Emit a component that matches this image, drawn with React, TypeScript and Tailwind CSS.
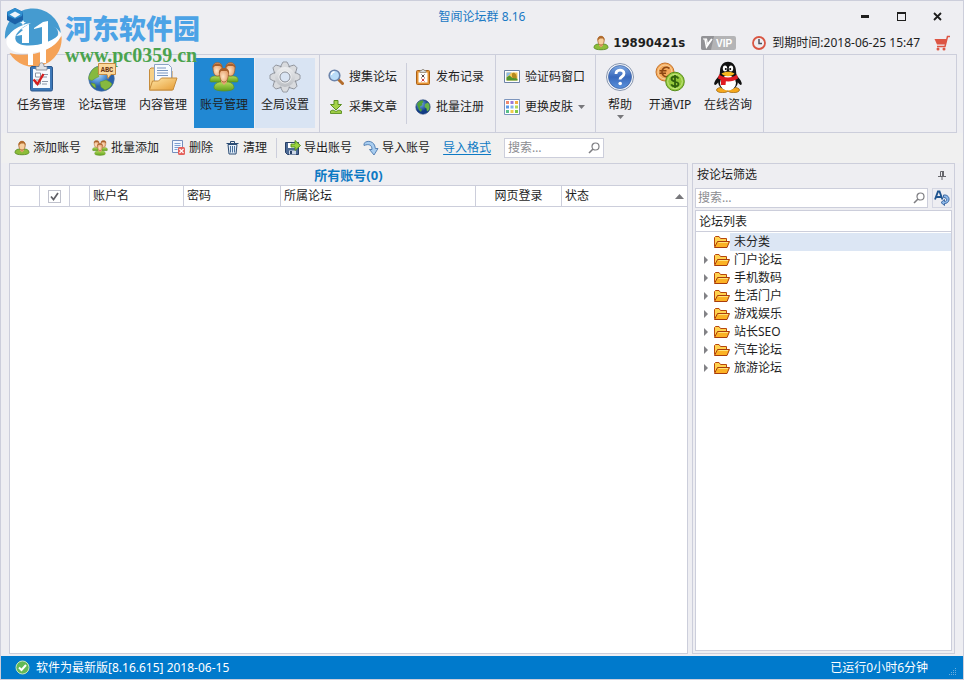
import type { ReactNode } from "react";

/* ---------- icons ---------- */

function Heads({ size }: { size: number }) {
  return (
    <svg width={size} height={size} viewBox="0 0 30 30">
      <defs>
        <radialGradient id="skin" cx="40%" cy="60%">
          <stop offset="0" stopColor="#ffe3c2" />
          <stop offset="1" stopColor="#e8a877" />
        </radialGradient>
        <linearGradient id="shirt" x2="0" y2="1">
          <stop offset="0" stopColor="#b5dc5a" />
          <stop offset="1" stopColor="#5f9f1e" />
        </linearGradient>
      </defs>
      <g stroke="#5f8f1e" strokeWidth=".6" fill="url(#shirt)">
        <path d="M1 18c0-3 2-4 6-4h5v6H2c-1 0-1-1-1-2z" />
        <path d="M29 18c0-3-2-4-6-4h-5v6h10c1 0 1-1 1-2z" />
      </g>
      <g stroke="#9a5a2a" strokeWidth=".7" fill="url(#skin)">
        <path d="M4 5c0-6 9-6 9 0 0 5-1 9-4.500 9S4 10 4 5z" />
        <path d="M17 5c0-6 9-6 9 0 0 5-1 9-4.500 9S17 10 17 5z" />
      </g>
      <path d="M3.500 6C3 0 14 0 13.500 6L11 4 6 4z" fill="#a8602c" />
      <path d="M16.500 6C16 0 27 0 26.500 6L24 4l-5 0z" fill="#a8602c" />
      <path d="M5 26c0-4 3-6 7-6h6c4 0 7 2 7 6 0 4-20 4-20 0z" stroke="#5f8f1e" strokeWidth=".7" fill="url(#shirt)" />
      <path d="M12 17h6v3l-3 3-3-3z" fill="#e3a272" />
      <path d="M10.500 11c0-6 9-6 9 0 0 5-1.500 9-4.500 9s-4.500-4-4.500-9z" stroke="#9a5a2a" strokeWidth=".7" fill="url(#skin)" />
      <path d="M10 12C8.500 4 21.500 4 20 12l-2-3-6 0z" fill="#a8602c" />
    </svg>
  );
}

function Person() {
  return (
    <svg width="16" height="16" viewBox="0 0 16 16">
      <path d="M1 12.500c0-2.500 2-3.500 5-3.500h4c3 0 5 1 5 3.500 0 3-14 3-14 0z" fill="#8dbd38" stroke="#4f851b" strokeWidth=".8" />
      <path d="M6 9h4v1.500l-2 2-2-2z" fill="#e0a06c" />
      <path d="M4.800 5c0-5 6.400-5 6.400 0 0 3-1.200 5-3.200 5S4.800 8 4.800 5z" fill="#f7cf9e" stroke="#a8672f" strokeWidth=".8" />
      <path d="M4.500 5.500C4-.500 12-.500 11.500 5.500L10 3.500H7z" fill="#b06a2d" />
    </svg>
  );
}

function Tasks() {
  return (
    <svg width="30" height="30" viewBox="0 0 30 30">
      <rect x="4.500" y="4.500" width="22" height="24.500" rx="1.500" fill="#3d78b8" stroke="#2b578c" />
      <path d="M7 7h17v19H7z" fill="#f7faff" />
      <path d="M10 8V4.500h3c0-5 5-5 5 0h3V8z" fill="#dfe1e5" stroke="#7d8490" strokeWidth=".8" />
      <path d="M9.500 11h5v4h-5zM9.500 18h5v4h-5z" fill="#fff" stroke="#8b95a3" />
      <path d="M16 12.500h6M16 15h5M16 19.500h6M16 22h5" stroke="#8a96a8" />
      <path d="M7.500 17.500l4 4.500 6-10" fill="none" stroke="#d41f1f" strokeWidth="2.400" />
    </svg>
  );
}

function Globe({ size }: { size: number }) {
  return (
    <svg width={size} height={size} viewBox="0 0 16 16">
      <defs>
        <radialGradient id="sea" cx="35%" cy="30%">
          <stop offset="0" stopColor="#79aee8" />
          <stop offset="1" stopColor="#123c86" />
        </radialGradient>
      </defs>
      <circle cx="8" cy="8" r="7.200" fill="url(#sea)" stroke="#1b3a72" strokeWidth=".6" />
      <path d="M2 5c1-2 3-3.500 5.500-3.800L8.500 3 7 4.500 7.500 6 5 7.500 5 9 7 10.500 6 13 4 11 3 8z" fill="#4fa03a" />
      <path d="M10 5l3-1.500c2 2.500 2 5 1 7.500l-2 1.500-.500-3L9.500 8z" fill="#69b447" />
    </svg>
  );
}

function Forum() {
  return (
    <svg width="30" height="30" viewBox="0 0 30 30">
      <defs>
        <radialGradient id="ball" cx="35%" cy="30%">
          <stop offset="0" stopColor="#cfe8fc" />
          <stop offset=".6" stopColor="#5b9ada" />
          <stop offset="1" stopColor="#2a61a8" />
        </radialGradient>
      </defs>
      <circle cx="14.500" cy="16.500" r="12.800" fill="url(#ball)" stroke="#4471a5" strokeWidth=".6" />
      <path d="M3 12c2-5 5-7 9-7.500l1 4-2 3 1 3-4 2-3 2-3-1c-.500-2 0-4 1-5.500zM13 20l6-2 4 2 2 2c-1 3-4 5-7 6l-4-3zM4 21l4 1 1 4C6.500 25.500 5 23.500 4 21z" fill="#86b93f" stroke="#5b9428" strokeWidth=".5" />
      <path d="M11.500 1.500h17v11h-4.500l-3 4-1-4h-8.500z" fill="#fbd79a" stroke="#c58a42" />
      <text x="20" y="9.800" textAnchor="middle" fontSize="7" fontWeight="bold" fontFamily="Liberation Mono, monospace" fill="#6b3410">
        ABC
      </text>
    </svg>
  );
}

function Content() {
  return (
    <svg width="32" height="30" viewBox="0 0 32 30">
      <defs>
        <linearGradient id="manila" x2="1" y2="1">
          <stop offset="0" stopColor="#ffe7a8" />
          <stop offset="1" stopColor="#e69c34" />
        </linearGradient>
      </defs>
      <path d="M2.500 28V7.500L4 6h6l2 3h13v19z" fill="#f6cf86" stroke="#c68c3c" />
      <path d="M7.500 2.500h14l3 3V20h-17z" fill="#f8fbff" stroke="#8ba3c4" />
      <path d="M10 6h9M10 8.500h11M10 11h11M10 13.500h11" stroke="#7a97c0" />
      <path d="M2.500 28l3-9h6l3-3h15.500l-4 12z" fill="url(#manila)" stroke="#c68c3c" strokeLinejoin="round" />
    </svg>
  );
}

function Gear() {
  const teeth = [0, 45, 90, 135, 180, 225, 270, 315];
  return (
    <svg width="32" height="32" viewBox="0 0 32 32">
      <defs>
        <linearGradient id="steel" x2="0" y2="1">
          <stop offset="0" stopColor="#eeeff1" />
          <stop offset="1" stopColor="#babdc2" />
        </linearGradient>
      </defs>
      <g fill="#d4d6da" stroke="#8d9199" strokeWidth=".9" strokeLinejoin="round">
        {teeth.map((a) => (
          <path key={a} d="M10.500 7.500L14 1h4l3.500 6.500z" transform={`rotate(${a} 16 16)`} />
        ))}
        <circle cx="16" cy="16" r="10.800" fill="url(#steel)" />
      </g>
      {teeth.map((a) => (
        <path key={a} d="M11.500 8L14.400 1.800h3.200L20.500 8z" fill="#d9dbde" transform={`rotate(${a} 16 16)`} />
      ))}
      <circle cx="16" cy="16" r="10" fill="url(#steel)" />
      <circle cx="16" cy="16" r="6" fill="none" stroke="#f4f5f7" />
      <circle cx="16" cy="16" r="5" fill="#d9e4f3" stroke="#8d9199" />
    </svg>
  );
}

function Magnifier() {
  return (
    <svg width="16" height="16" viewBox="0 0 16 16">
      <path d="M10 10l4.500 4.500" stroke="#b36c2c" strokeWidth="3" strokeLinecap="round" />
      <circle cx="6.500" cy="6.500" r="5.300" fill="#b9dcf8" stroke="#6c84ab" strokeWidth="1.600" />
      <path d="M3.500 6a3 3 0 0 1 3-3" fill="none" stroke="#fff" strokeWidth="1.300" />
    </svg>
  );
}

function DownArrow() {
  return (
    <svg width="16" height="16" viewBox="0 0 16 16">
      <path d="M6 1.500h4v4h3.500L8 11 2.500 5.500H6z" fill="#a5d34a" stroke="#5b8f20" />
      <path d="M2.500 12l2.500-1 3 1.500 3-1.500 2.500 1v2.500h-11z" fill="#9dcc45" stroke="#5b8f20" strokeWidth=".9" />
    </svg>
  );
}

function Record() {
  return (
    <svg width="16" height="16" viewBox="0 0 16 16">
      <rect x="1.500" y="1.500" width="13" height="14" rx="1" fill="#e69433" stroke="#a9601a" />
      <path d="M3.500 3.500h9v10h-9z" fill="#fff" />
      <path d="M5 3.500v-2h1.500C6.500 0 9.500 0 9.500 1.500H11v2z" fill="#d4d7dc" stroke="#8a8177" strokeWidth=".7" />
      <path d="M6.500 5.500l3 3m0-3l-3 3" stroke="#5b4545" />
      <path d="M6.500 9.500l3 3m0-3l-3 3" stroke="#d34040" />
    </svg>
  );
}

function Picture() {
  return (
    <svg width="16" height="16" viewBox="0 0 16 16">
      <path d="M.500 1.500h15v12H.500z" fill="#fff" stroke="#6d83a6" />
      <path d="M2.500 3.500h11v8h-11z" fill="#f5c65a" />
      <path d="M2.500 3.500h5l-5 5z" fill="#89bdea" />
      <path d="M2.500 11.500V8.500l3-2 3 2.500 2-1 3 2v1.500z" fill="#4f952e" />
      <path d="M8 4.500l2-1 2 2 1 3-2 1-3-1z" fill="#b48a1e" />
    </svg>
  );
}

const swatches = ["#ef8a6f", "#9b79d8", "#f2ad41", "#5b98e8", "#7fb5ec", "#b2d955", "#5bc08a", "#f2cb4b", "#7fc845"];

function Palette() {
  return (
    <svg width="16" height="16" viewBox="0 0 16 16">
      <path d="M.500.500h15v15H.500z" fill="#fff" stroke="#7d95bd" />
      {swatches.map((c, i) => (
        <rect key={c} x={2 + (i % 3) * 4.500} y={2 + Math.floor(i / 3) * 4.500} width="3" height="3" fill={c} />
      ))}
    </svg>
  );
}

function Help() {
  return (
    <svg width="30" height="30" viewBox="0 0 30 30">
      <defs>
        <linearGradient id="help" x2="0" y2="1">
          <stop offset="0" stopColor="#7fa9e2" />
          <stop offset=".5" stopColor="#3868bc" />
          <stop offset="1" stopColor="#5b93dc" />
        </linearGradient>
      </defs>
      <circle cx="15" cy="15" r="13.500" fill="#f4f7fc" stroke="#8795ad" />
      <circle cx="15" cy="15" r="11.500" fill="url(#help)" stroke="#3b5f9f" strokeWidth=".7" />
      <path d="M11 12c0-5 8-5 8-.500 0 3.500-4 3-4 6" fill="none" stroke="#fff" strokeWidth="2.800" />
      <circle cx="15.200" cy="21.500" r="1.800" fill="#fff" />
    </svg>
  );
}

function Coins() {
  return (
    <svg width="30" height="30" viewBox="0 0 30 30">
      <circle cx="10" cy="10" r="9" fill="#f3a95b" stroke="#c6732a" />
      <circle cx="10" cy="10" r="7" fill="none" stroke="#fbd3a0" />
      <path d="M14.500 6.500c-4-3-7.500 0-7.500 3.500s3.500 6.500 7 3.500M4.500 8.800h7M4.500 11.200h6.500" fill="none" stroke="#8d4713" strokeWidth="1.600" />
      <circle cx="20" cy="19.500" r="9.300" fill="#94c83a" stroke="#568d1c" />
      <circle cx="20" cy="19.500" r="7.300" fill="none" stroke="#c6e685" />
      <path d="M23.500 16.500c-1.500-2.500-7-2.500-7 .500s7 2 7 5-6 3-7.300.300M20 13v13" fill="none" stroke="#315f0d" strokeWidth="1.800" />
    </svg>
  );
}

function Penguin() {
  return (
    <svg width="30" height="32" viewBox="0 0 30 32">
      <path d="M6 15C2 19 0 23 2 24c1 0 3-2 4-4zM24 15c4 4 6 8 4 9-1 0-3-2-4-4z" fill="#111" />
      <ellipse cx="9.500" cy="29" rx="6" ry="2.700" fill="#f6a81c" stroke="#97600c" strokeWidth=".7" />
      <ellipse cx="20.500" cy="29" rx="6" ry="2.700" fill="#f6a81c" stroke="#97600c" strokeWidth=".7" />
      <path d="M5 20C5 16 7 14 7 10 7-2.500 23-2.500 23 10c0 4 2 6 2 10 0 12-20 12-20 0z" fill="#111" />
      <ellipse cx="15" cy="22" rx="8" ry="7.500" fill="#fff" />
      <ellipse cx="12" cy="7.500" rx="2.200" ry="3" fill="#fff" />
      <ellipse cx="18" cy="7.500" rx="2.200" ry="3" fill="#fff" />
      <circle cx="12.800" cy="8" r="1" />
      <circle cx="17.200" cy="8" r="1" />
      <path d="M8.500 12.500c4-2.500 9-2.500 13 0-3 3.500-10 3.500-13 0z" fill="#f8b71e" />
      <path d="M6 13.500c5 4 13 4 18 0l1 4c-6 4-13 4-20 0z" fill="#e01b22" />
      <path d="M8 18l5 1-.500 5H8z" fill="#e01b22" />
    </svg>
  );
}

function DeleteIcon() {
  return (
    <svg width="16" height="16" viewBox="0 0 16 16">
      <path d="M2.500.500h10v12h-10z" fill="#f2f7ff" stroke="#7690bd" />
      <path d="M4.500 3.500h6M4.500 5.500h6M4.500 7.500h6M4.500 9.500h3" stroke="#7ea0d2" />
      <rect x="8" y="7" width="7" height="8" rx="1.500" fill="#e4605a" />
      <path d="M9.500 9l4 4m0-4l-4 4" stroke="#fff" strokeWidth="1.200" />
    </svg>
  );
}

function Trash() {
  return (
    <svg width="16" height="16" viewBox="0 0 16 16">
      <path d="M4 4.500h9l-1 9.500H5z" fill="#e3eef9" stroke="#2b4c74" />
      <path d="M2.500 3.500h12M6.500 3V1.500h4V3" fill="none" stroke="#2b4c74" />
      <path d="M6.500 6v6.500M8.500 6v6.500M10.500 6v6.500" stroke="#4a709c" />
    </svg>
  );
}

function Export() {
  return (
    <svg width="16" height="16" viewBox="0 0 16 16">
      <path d="M.500 2.500h13v12h-11l-2-2z" fill="#4c6a95" stroke="#263f66" />
      <path d="M3 3h8v5H3z" fill="#fff" />
      <path d="M4 10.500h7v4H4z" fill="#cfd9e8" />
      <path d="M5 11h2v3H5z" fill="#263f66" />
      <path d="M6 4h4V.500l5.500 5L10 10.500V7H6z" fill="#9bd33d" stroke="#4d8a1b" strokeWidth=".9" />
    </svg>
  );
}

function Import() {
  return (
    <svg width="16" height="16" viewBox="0 0 16 16">
      <path d="M1 3.500C4-.500 12 1 12.300 8.500H15L11 15 6.500 9.500H9C9 5 6 3.500 1 5.500z" fill="#a8cdf0" stroke="#4d79ae" strokeWidth=".9" strokeLinejoin="round" />
    </svg>
  );
}

function Folder() {
  return (
    <svg className="shrink-0" width="16" height="14" viewBox="0 0 16 14">
      <path d="M.500 11.500v-9l1-1H5l1.500 2h6v3" fill="#ffd24f" stroke="#b8470c" />
      <path d="M.500 12.500L3.500 6.500h12l-2.500 6z" fill="#fbb224" stroke="#a93c0b" strokeLinejoin="round" />
      <path d="M4.500 7.500h9.500" stroke="#ffe27a" />
    </svg>
  );
}

function SearchGlyph() {
  return (
    <svg className="shrink-0" width="12" height="12" viewBox="0 0 12 12" fill="none" stroke="#7e7e82">
      <circle cx="7.500" cy="4.500" r="3.500" strokeWidth="1.200" />
      <path d="M5 7L1 11" strokeWidth="1.600" />
    </svg>
  );
}

function Watermark() {
  return (
    <div className="pointer-events-none absolute left-[3px] top-1.5 z-10 flex gap-[3px]">
      <svg width="58" height="60" viewBox="4 8 58 60">
        <path d="M5 40A28 28 0 0 1 61 35C56 22 22 20 5 40z" fill="#459bd0" />
        <path d="M14 44C8 36 22 24 38 24c14 0 21 5 20 11-1 9-14 15-28 15-7 0-13-2-16-6z" fill="#459bd0" />
        <path d="M61.500 37a28 28 0 0 1-52 17c18 5 42 0 52-17z" fill="#f5a257" />
        <path d="M7 46c-3-10 10-20 24-22-11 5-18 12-15 18 5 9 37 4 45-9 0 12-15 20-31 21-11 1-20-1-23-8z" fill="#fff" />
        <path d="M16 37l7-6-2-1 8-5v19h-7v-8zM34 29l9-6 5-1v26h-6V28l-8 2zM28 52h5v14h-5zM40 50h6v14h-6z" fill="#fff" />
        <path d="M23 21l1 2 2 .500-2 1-1 2-1-2-2-1 2-.500z" fill="#fff" />
        <path d="M15 9l8 4v8l-8 4.500L7 21v-8z" fill="#1b62a8" />
        <path d="M15 9l8 4-1 4-7 3-7-3-1-4z" fill="#2f8fd0" />
        <path d="M15 12.500l5.500 3-5.500 3.200-5.500-3.200z" fill="#eef5fb" />
      </svg>
      <div className="pt-1">
        <div className="font-['Noto_Sans_CJK_SC',sans-serif] text-[27px] font-black leading-[34px] text-[#4ca3e6]">河东软件园</div>
        <div className="font-['Liberation_Serif',serif] text-xl font-bold leading-5 text-[#4ba34e]">www.pc0359.cn</div>
      </div>
    </div>
  );
}

/* ---------- ribbon ---------- */

type ItemProps = { icon: ReactNode; label: string; arrow?: boolean; className?: string };

function BigButton({ icon, label, arrow, className = "w-15" }: ItemProps) {
  return (
    <button className={`flex h-[70px] flex-col items-center pt-[3px] ${className}`}>
      <span className="relative z-20 flex h-8 items-center">{icon}</span>
      <span className="mt-0.5 leading-5">{label}</span>
      {arrow && <Caret />}
    </button>
  );
}

function Caret() {
  return (
    <svg width="7" height="4" viewBox="0 0 7 4">
      <path d="M0 0h7L3.500 4z" fill="#77777b" />
    </svg>
  );
}

function SmallButton({ icon, label, arrow, className = "gap-[5px]" }: ItemProps) {
  return (
    <button className={`flex h-5 items-center whitespace-nowrap ${className}`} aria-haspopup={arrow ? "menu" : undefined}>
      {icon}
      <span>{label}</span>
      {arrow && <Caret />}
    </button>
  );
}

function SmallGroup({ children, className }: { children: ReactNode; className: string }) {
  return <div className={`flex flex-col gap-2.5 border-[#cccedb] ${className}`}>{children}</div>;
}

function Header() {
  return (
    <header>
      <div className="grid h-[31px] grid-cols-[1fr_auto_1fr] items-center">
        <span />
        <h1 className="text-[#1979c4]">智闻论坛群 8.16</h1>
        <div className="flex justify-end gap-1 pr-2.5">
          <button className="flex h-6 w-8 items-center justify-center" aria-label="最小化">
            <span className="h-[3px] w-2 bg-[#1e1e1e]" />
          </button>
          <button className="flex h-6 w-8 items-center justify-center" aria-label="最大化">
            <span className="h-[9px] w-[9px] border border-t-2 border-[#1e1e1e]" />
          </button>
          <button className="flex h-6 w-8 items-center justify-center" aria-label="关闭">
            <svg width="9" height="9" viewBox="0 0 9 9" stroke="#1e1e1e" strokeWidth="1.800">
              <path d="M1 1l7 7M8 1L1 8" />
            </svg>
          </button>
        </div>
      </div>
      <div className="flex h-[22px] items-center justify-end gap-4 pr-3">
        <span className="flex items-center gap-1">
          <Person />
          <b className="font-['DejaVu_Sans_Condensed','DejaVu_Sans',sans-serif] text-[13px]">19890421s</b>
        </span>
        <svg width="35" height="14" viewBox="0 0 35 14">
          <rect width="35" height="14" rx="2" fill="#b4b4b6" />
          <path d="M2 0h11l-3 14H2a2 2 0 0 1-2-2V2a2 2 0 0 1 2-2z" fill="#929296" />
          <path d="M2 3h3.500l1 5 4-5" fill="none" stroke="#fff" strokeWidth="1.200" />
          <path d="M4 3l1.500 8L11 3" fill="none" stroke="#fff" strokeWidth="1.500" />
          <text x="15" y="11" fontSize="10" fontWeight="bold" fontFamily="Liberation Sans, sans-serif" fill="#fff">
            VIP
          </text>
        </svg>
        <span className="flex items-center gap-1.5">
          <svg width="14" height="14" viewBox="0 0 14 14" fill="none">
            <circle cx="7" cy="7" r="6" stroke="#d95542" strokeWidth="1.800" />
            <path d="M7 3v4.500h3" stroke="#50505c" strokeWidth="1.500" />
          </svg>
          到期时间:2018-06-25 15:47
        </span>
        <a href="#cart" aria-label="购物车" className="-ml-0.5">
          <svg width="17" height="16" viewBox="0 0 17 16" fill="none" stroke="#dd5544">
            <path d="M16 1.500h-2.500L11 11.500H3" strokeWidth="1.500" />
            <path d="M.500 4H13l-1.500 5.500H3z" fill="#dd5544" stroke="none" />
            <circle cx="4" cy="14" r="1.500" fill="#dd5544" stroke="none" />
            <circle cx="10" cy="14" r="1.500" fill="#dd5544" stroke="none" />
          </svg>
        </a>
      </div>
    </header>
  );
}

function Ribbon() {
  return (
    <nav className="mx-1.5 flex h-[79px] border border-[#cccedb]">
      <div className="flex gap-px border-r border-[#cccedb] py-[3px] pl-[3px] pr-1">
        <BigButton icon={<Tasks />} label="任务管理" />
        <BigButton icon={<Forum />} label="论坛管理" />
        <BigButton icon={<Content />} label="内容管理" />
        <BigButton icon={<Heads size={30} />} label="账号管理" className="w-15 bg-[#2188d3]" />
        <BigButton icon={<Gear />} label="全局设置" className="w-15 bg-[#d9e4f3]" />
      </div>
      <div className="flex border-r border-[#cccedb] py-2">
        <SmallGroup className="border-r py-1 pl-2 pr-[9px]">
          <SmallButton icon={<Magnifier />} label="搜集论坛" />
          <SmallButton icon={<DownArrow />} label="采集文章" />
        </SmallGroup>
        <SmallGroup className="py-1 pl-2 pr-[11px]">
          <SmallButton icon={<Record />} label="发布记录" />
          <SmallButton icon={<Globe size={16} />} label="批量注册" />
        </SmallGroup>
      </div>
      <SmallGroup className="border-r py-3 pl-2 pr-2.5">
        <SmallButton icon={<Picture />} label="验证码窗口" />
        <SmallButton icon={<Palette />} label="更换皮肤" arrow />
      </SmallGroup>
      <div className="flex border-r border-[#cccedb] py-[3px] pr-[3px]">
        <BigButton icon={<Help />} label="帮助" className="w-12" arrow />
        <BigButton icon={<Coins />} label="开通VIP" className="w-13" />
        <BigButton icon={<Penguin />} label="在线咨询" className="w-16" />
      </div>
    </nav>
  );
}

function Toolbar() {
  return (
    <div className="flex h-[30px] items-center bg-[#f0f0f0] pl-[13px]">
      <div className="flex gap-[11px]">
        <SmallButton icon={<Person />} label="添加账号" className="gap-[3px]" />
        <SmallButton icon={<Heads size={16} />} label="批量添加" className="gap-[3px]" />
        <SmallButton icon={<DeleteIcon />} label="删除" className="gap-[3px]" />
        <SmallButton icon={<Trash />} label="清理" className="gap-[3px]" />
      </div>
      <span className="ml-[9px] mr-2 h-5 w-px bg-[#cccedb]" />
      <div className="flex gap-[11px]">
        <SmallButton icon={<Export />} label="导出账号" className="gap-[3px]" />
        <SmallButton icon={<Import />} label="导入账号" className="gap-[3px]" />
      </div>
      <a href="#format" className="mx-[13px] text-[#0e7ac4] underline underline-offset-2">
        导入格式
      </a>
      <label className="flex h-5 w-[100px] items-center border border-[#cccedb] bg-white px-[3px]">
        <input className="w-full min-w-0 outline-none placeholder:text-[#8c8c90]" placeholder="搜索…" aria-label="搜索" />
        <SearchGlyph />
      </label>
    </div>
  );
}

/* ---------- panels ---------- */

function CheckAll() {
  return (
    <label className="mx-auto grid h-[13px] w-[13px] place-items-center *:col-start-1 *:row-start-1">
      <input type="checkbox" defaultChecked aria-label="全选" className="peer h-[13px] w-[13px] appearance-none border border-[#bfc1cc] bg-white" />
      <svg className="invisible peer-checked:visible" width="9" height="9" viewBox="0 0 9 9">
        <path d="M1 4.500l2.500 3L8 1" fill="none" stroke="#606066" strokeWidth="1.700" />
      </svg>
    </label>
  );
}

function Accounts() {
  return (
    <section className="flex min-w-0 flex-1 flex-col border border-[#cccedb] bg-white">
      <h2 className="h-[22px] border-b border-[#cccedb] bg-[#eeeef2] text-center text-[13px] font-bold leading-[22px] text-[#0e7ac4]">所有账号(0)</h2>
      <table className="w-full table-fixed border-separate border-spacing-0">
        <thead>
          <tr className="h-[21px] text-left *:border-b *:border-r *:border-[#cccedb] *:px-[3px] *:py-0 *:font-normal *:last:border-r-0">
            <th className="w-[30px]" />
            <th className="w-[30px]">
              <CheckAll />
            </th>
            <th className="w-5" />
            <th className="w-[94px]">账户名</th>
            <th className="w-[97px]">密码</th>
            <th className="w-[195px]">所属论坛</th>
            <th className="w-[86px] text-center">网页登录</th>
            <th>
              <span className="flex items-center justify-between">
                状态
                <svg width="9" height="5" viewBox="0 0 9 5">
                  <path d="M0 5h9L4.500 0z" fill="#77777b" />
                </svg>
              </span>
            </th>
          </tr>
        </thead>
      </table>
    </section>
  );
}

const forums = ["门户论坛", "手机数码", "生活门户", "游戏娱乐", "站长SEO", "汽车论坛", "旅游论坛"];

function ForumFilter() {
  return (
    <aside className="flex w-[263px] shrink-0 flex-col border border-[#cccedb] p-0.5">
      <div className="flex h-[22px] items-center justify-between pb-1 pl-0.5 pr-1.5">
        <h2>按论坛筛选</h2>
        <svg width="8" height="9" viewBox="0 0 8 9" stroke="#66666c" fill="none">
          <path d="M2.500 5V.500h3V5M0 5.500h8M4 5.500V9" />
          <path d="M5 0v5" strokeWidth="2" />
        </svg>
      </div>
      <div className="flex gap-1">
        <label className="flex h-5 flex-1 items-center border border-[#cccedb] bg-white px-0.5">
          <input className="w-full min-w-0 outline-none placeholder:text-[#8c8c90]" placeholder="搜索…" aria-label="搜索论坛" />
          <SearchGlyph />
        </label>
        <button className="flex h-5 w-5 items-center justify-center border border-[#d4d6e2]" aria-label="替换">
          <svg className="shrink-0" width="16" height="16" viewBox="0 0 16 16" fill="none">
            <path d="M1 9.500L4 1.500h1.500L8.500 9.500M2.500 7h4.500" stroke="#1f548f" strokeWidth="1.900" />
            <path d="M9.500 5C16.500 4 17 13.500 10.500 13.500V15.500L7 12.500 10.500 9.500V11.500C13.500 11.500 13.500 7.500 9.500 7.500z" fill="#8db8e8" stroke="#315f9c" strokeWidth=".9" />
          </svg>
        </button>
      </div>
      <div className="mt-0.5 flex-1 border border-[#cccedb] bg-white">
        <h3 className="h-[21px] border-b border-[#cccedb] pl-[3px] leading-[21px]">论坛列表</h3>
        <ul className="pt-px">
          <li className="flex h-[18px] items-center pl-[18px]">
            <Folder />
            <button className="h-[18px] flex-1 bg-[#dce6f4] pl-1 text-left">未分类</button>
          </li>
          {forums.map((name) => (
            <li key={name} className="flex h-[18px] items-center pl-2">
              <svg className="mr-1.5 shrink-0" width="4" height="8" viewBox="0 0 4 8">
                <path d="M0 0v8l4-4z" fill="#828286" />
              </svg>
              <Folder />
              <button className="flex-1 pl-1 text-left">{name}</button>
            </li>
          ))}
        </ul>
      </div>
    </aside>
  );
}

function StatusBar() {
  return (
    <footer className="flex h-[23px] items-center bg-[#007acc] pl-3.5 pr-1.5 text-white">
      <svg width="15" height="15" viewBox="0 0 15 15">
        <circle cx="7.500" cy="7.500" r="6.500" fill="#62b957" stroke="#c5e6bd" />
        <path d="M4 7.500l2.500 2.500L11 5" fill="none" stroke="#fff" strokeWidth="2" />
      </svg>
      <span className="ml-1.5 flex-1">软件为最新版[8.16.615] 2018-06-15</span>
      <span className="mr-5">已运行0小时6分钟</span>
      <svg className="self-end" width="9" height="12" viewBox="0 0 9 12" fill="#6aaede">
        <path d="M7 1h1v1H7zM5 3h1v1H5zM7 3h1v1H7zM3 5h1v1H3zM5 5h1v1H5zM7 5h1v1H7zM1 7h1v1H1zM3 7h1v1H3zM5 7h1v1H5zM7 7h1v1H7z" />
      </svg>
    </footer>
  );
}

export default function App() {
  return (
    <div className="relative flex min-h-screen flex-col border border-[#cccedb] bg-[#eeeef2] font-['Noto_Sans','Noto_Sans_CJK_SC',sans-serif] text-xs text-[#1e1e1e]">
      <Watermark />
      <Header />
      <Ribbon />
      <Toolbar />
      <main className="flex flex-1 gap-1 px-2 pb-0.5">
        <Accounts />
        <ForumFilter />
      </main>
      <StatusBar />
    </div>
  );
}
